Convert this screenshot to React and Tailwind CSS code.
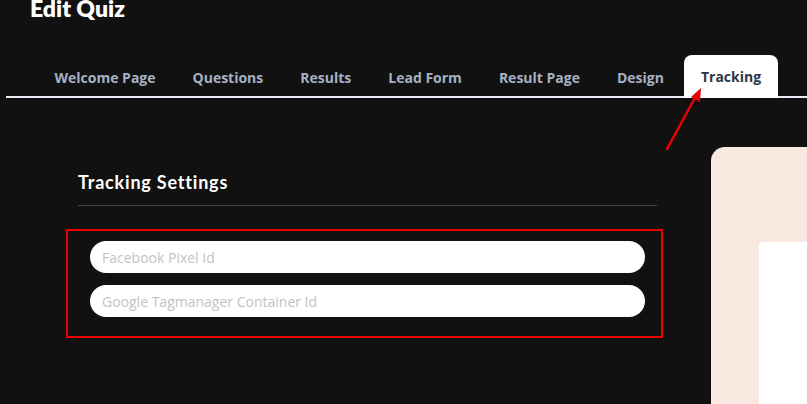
import React from "react";

const TABS = ["Welcome Page", "Questions", "Results", "Lead Form", "Result Page", "Design", "Tracking"];

function Arrow() {
  return (
    <svg className="absolute left-[660px] top-[84px]" width="50" height="70" viewBox="0 0 50 70">
      <line x1="7" y1="65" x2="36" y2="12" stroke="#ee0000" strokeWidth="2.5" strokeLinecap="round" />
      <polygon points="41,4 40,18 31,13" fill="#ee0000" />
    </svg>
  );
}

export default function App() {
  const active = "Tracking";
  return (
    <div className="relative w-[807px] h-[404px] overflow-hidden bg-[#111111]" style={{ fontFamily: "'Open Sans', sans-serif" }}>
      {/* header */}
      <h1 className="pl-[30px] -mt-[3px] text-[23px] leading-none font-extrabold text-white" style={{ fontFamily: "Lato, sans-serif" }}>
        Edit Quiz
      </h1>

      {/* tabs */}
      <div className="mt-[34px] ml-[6px] border-b-2 border-[#e6ecf5] flex pl-[30px] h-[44px] items-end">
        {TABS.map(t => (
          <div
            key={t}
            className={`mx-[1.5px] px-[17px] h-[42px] -mb-[2px] flex items-center text-[14px] font-bold rounded-t-[8px] ${t === active ? "bg-white text-[#2d3748] h-[43px] pb-[1px]" : "text-[#a6b1c4]"}`}
          >
            {t}
          </div>
        ))}
      </div>

      {/* body */}
      <div className="flex">
        <div className="ml-[66px] w-[597px] pt-[73px]">
          <div className="px-[12px]">
            <h2 className="text-[18px] font-bold text-white leading-[22px] tracking-[0.8px]" style={{ fontFamily: "Lato, sans-serif" }}>Tracking Settings</h2>
            <div className="mt-[12px] h-px w-[579px] bg-[#444444]" />
          </div>
          <div className="mt-[23px] border-[2.5px] border-[#ee0000] h-[109px] px-[22px] pt-[10px] flex flex-col gap-[12px]">
            <input
              className="h-[32px] w-[555px] rounded-full bg-white px-[12px] text-[14px] text-gray-700 placeholder:text-[#c2c2c2] outline-none"
              placeholder="Facebook Pixel Id"
            />
            <input
              className="h-[32px] w-[555px] rounded-full bg-white px-[12px] text-[14px] text-gray-700 placeholder:text-[#c2c2c2] outline-none"
              placeholder="Google Tagmanager Container Id"
            />
          </div>
        </div>

        <div className="ml-[48px] mt-[49px] w-[300px] h-[400px] shrink-0 rounded-tl-[14px] bg-[#f9e8e0] pl-[48px] pt-[95px]">
          <div className="h-[300px] bg-white rounded-tl-[4px]" />
        </div>
      </div>

      <Arrow />
    </div>
  );
}
